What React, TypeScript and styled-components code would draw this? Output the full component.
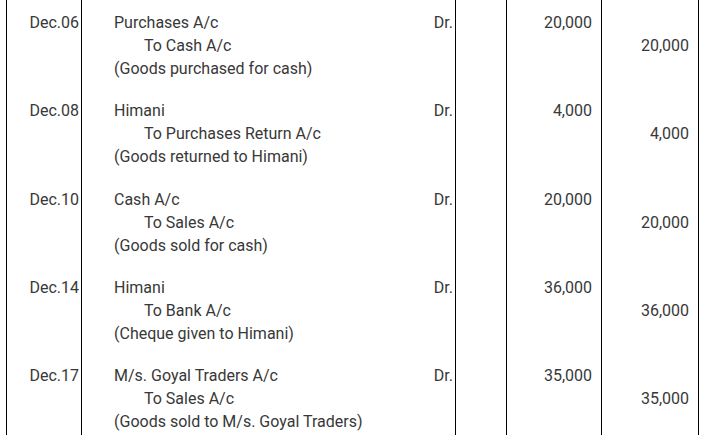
import React from "react";
import styled, { createGlobalStyle } from "styled-components";

const Global = createGlobalStyle`
  html, body { margin: 0; padding: 0; background: #ffffff; }
  body { font-family: Roboto, "Liberation Sans", sans-serif; overflow: hidden; }
`;

const Table = styled.div`
  margin-left: 6px;
  display: grid;
  grid-template-columns: 75px 374px 51px 95px 98px;
  width: 693px;
  color: #383838;
  font-size: 16px;
  line-height: 23px;
`;

const Cell = styled.div<{ $align?: "left" | "right"; $last?: boolean; $pl?: number; $pr?: number }>`
  box-sizing: border-box;
  border-left: 1px solid #000;
  border-right: ${(p) => (p.$last ? "1px solid #000" : "none")};
  padding-top: 11px;
  padding-bottom: 8.25px;
  padding-left: ${(p) => p.$pl ?? 0}px;
  padding-right: ${(p) => p.$pr ?? 0}px;
  text-align: ${(p) => p.$align ?? "left"};
  display: flex;
  flex-direction: column;
  white-space: nowrap;
`;

const Line = styled.div<{ $indent?: boolean }>`
  height: 23px;
  padding-left: ${(p) => (p.$indent ? "30px" : "0")};
`;

const FirstLine = styled.div`
  height: 23px;
  display: flex;
  justify-content: space-between;
`;

type Entry = {
  date: string;
  debitAc: string;
  creditAc: string;
  narration: string;
  amount: string;
};

const entries: Entry[] = [
  { date: "Dec.06", debitAc: "Purchases A/c", creditAc: "To Cash A/c", narration: "(Goods purchased for cash)", amount: "20,000" },
  { date: "Dec.08", debitAc: "Himani", creditAc: "To Purchases Return A/c", narration: "(Goods returned to Himani)", amount: "4,000" },
  { date: "Dec.10", debitAc: "Cash A/c", creditAc: "To Sales A/c", narration: "(Goods sold for cash)", amount: "20,000" },
  { date: "Dec.14", debitAc: "Himani", creditAc: "To Bank A/c", narration: "(Cheque given to Himani)", amount: "36,000" },
  { date: "Dec.17", debitAc: "M/s. Goyal Traders A/c", creditAc: "To Sales A/c", narration: "(Goods sold to M/s. Goyal Traders)", amount: "35,000" },
];

export default function App() {
  return (
    <>
      <Global />
      <Table>
        {entries.map((e) => (
          <React.Fragment key={e.date}>
            <Cell $align="right" $pr={2}>
              <Line>{e.date}</Line>
            </Cell>
            <Cell $pl={32} $pr={2}>
              <FirstLine>
                <span>{e.debitAc}</span>
                <span>Dr.</span>
              </FirstLine>
              <Line $indent>{e.creditAc}</Line>
              <Line>{e.narration}</Line>
            </Cell>
            <Cell />
            <Cell $align="right" $pr={9}>
              <Line>{e.amount}</Line>
            </Cell>
            <Cell $align="right" $pr={9} $last>
              <Line />
              <Line>{e.amount}</Line>
            </Cell>
          </React.Fragment>
        ))}
      </Table>
    </>
  );
}
